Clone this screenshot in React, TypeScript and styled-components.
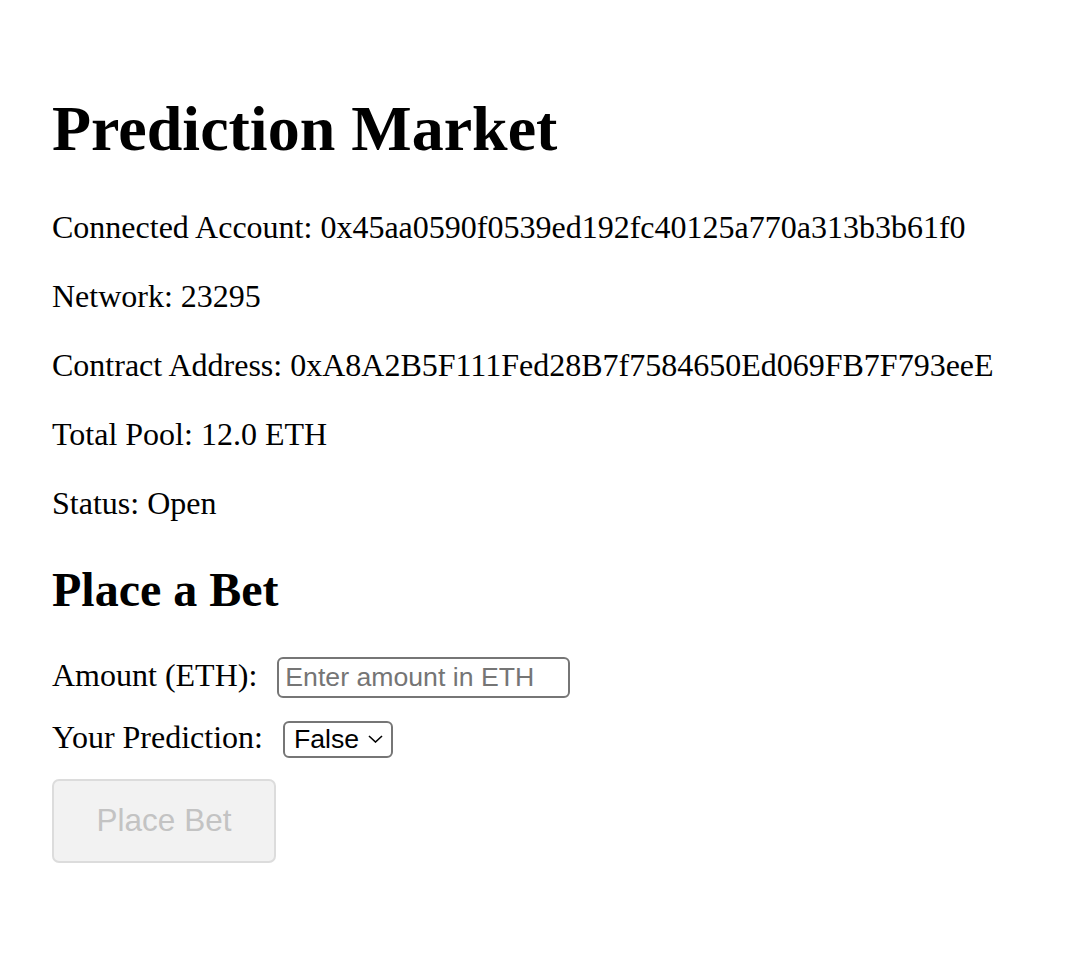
import React, { useState } from "react";
import styled, { createGlobalStyle } from "styled-components";

const GlobalStyle = createGlobalStyle`
  html, body {
    margin: 0;
    padding: 0;
    background: #ffffff;
  }
  body {
    font-family: "Liberation Serif", "Times New Roman", serif;
    font-size: 32px;
    color: #000000;
  }
`;

const Page = styled.div`
  padding: 49px 52px;
`;

const Title = styled.h1`
  font-size: 64px;
  font-weight: 700;
  margin: 43px 0;
`;

const InfoLine = styled.p`
  margin: 32px 0;
`;

const SectionTitle = styled.h2`
  font-size: 48px;
  font-weight: 700;
  margin: 40px 0;
`;

const FieldRow = styled.div`
  display: flex;
  align-items: baseline;
  margin-bottom: 21px;
`;

const FieldLabel = styled.label<{ $gap: number }>`
  margin-right: ${(p) => p.$gap}px;
`;

const TextInput = styled.input`
  box-sizing: border-box;
  width: 293px;
  height: 41px;
  margin: 0;
  padding: 0 6px;
  border: 2px solid #767676;
  border-radius: 6px;
  font-family: "Liberation Sans", Arial, sans-serif;
  font-size: 26.67px;
  color: #000000;
  background: #ffffff;
  outline: none;

  &::placeholder {
    color: #757575;
  }
`;

const SelectBox = styled.span`
  box-sizing: border-box;
  display: inline-flex;
  align-items: center;
  gap: 8px;
  height: 37px;
  padding: 0 8px 0 9px;
  border: 2px solid #767676;
  border-radius: 6px;
  background: #ffffff;
`;

const NativeSelect = styled.select`
  appearance: none;
  -webkit-appearance: none;
  border: none;
  margin: 0;
  padding: 0;
  background: transparent;
  font-family: "Liberation Sans", Arial, sans-serif;
  font-size: 26.67px;
  color: #000000;
  outline: none;
`;

const Chevron = styled.svg`
  flex: none;
  pointer-events: none;
`;

const SubmitButton = styled.button`
  box-sizing: border-box;
  width: 224px;
  height: 84px;
  padding: 0;
  border: 2px solid #dcdcdc;
  border-radius: 7px;
  background: #f2f2f2;
  color: #c3c3c3;
  font-family: "Liberation Sans", Arial, sans-serif;
  font-size: 31.5px;
`;

const App = () => {
  const [amount, setAmount] = useState("");
  const [prediction, setPrediction] = useState("false");

  return (
    <Page>
      <GlobalStyle />
      <Title>Prediction Market</Title>
      <InfoLine>Connected Account: 0x45aa0590f0539ed192fc40125a770a313b3b61f0</InfoLine>
      <InfoLine>Network: 23295</InfoLine>
      <InfoLine>Contract Address: 0xA8A2B5F111Fed28B7f7584650Ed069FB7F793eeE</InfoLine>
      <InfoLine>Total Pool: 12.0 ETH</InfoLine>
      <InfoLine>Status: Open</InfoLine>

      <SectionTitle>Place a Bet</SectionTitle>
      <FieldRow>
        <FieldLabel $gap={20} htmlFor="amount">Amount (ETH):</FieldLabel>
        <TextInput
          id="amount"
          type="text"
          placeholder="Enter amount in ETH"
          value={amount}
          onChange={(e) => setAmount(e.target.value)}
        />
      </FieldRow>
      <FieldRow>
        <FieldLabel $gap={20} htmlFor="prediction">Your Prediction:</FieldLabel>
        <SelectBox>
          <NativeSelect
            id="prediction"
            value={prediction}
            onChange={(e) => setPrediction(e.target.value)}
          >
            <option value="true">True</option>
            <option value="false">False</option>
          </NativeSelect>
          <Chevron width="15" height="8" viewBox="0 0 15 8">
            <path d="M1 1 L7.5 7 L14 1" fill="none" stroke="#000" strokeWidth="1.6" />
          </Chevron>
        </SelectBox>
      </FieldRow>
      <SubmitButton disabled={!amount}>Place Bet</SubmitButton>
    </Page>
  );
};

export default App;
